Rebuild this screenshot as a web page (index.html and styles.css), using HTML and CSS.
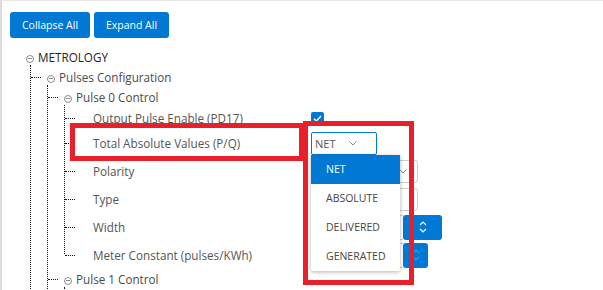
FILE: index.html
```html
<!DOCTYPE html>
<html>
<head>
<meta charset="utf-8">
<link rel="stylesheet" href="styles.css">
</head>
<body>
<div class="frame">
  <div class="toolbar">
    <button class="btn btn-collapse">Collapse All</button>
    <button class="btn btn-expand">Expand All</button>
  </div>
  <ul class="tree">
    <li class="node">
      <div class="row"><span class="toggle"></span><span class="label label-root">METROLOGY</span></div>
      <ul class="children children-root">
        <li class="node">
          <div class="row"><span class="toggle"></span><span class="label label-group">Pulses Configuration</span></div>
          <ul class="children">
            <li class="node">
              <div class="row"><span class="toggle"></span><span class="label label-group">Pulse 0 Control</span></div>
              <ul class="children children-leaves">
                <li class="leaf leaf-short">
                  <div class="row"><span class="spacer"></span><span class="label label-leaf">Output Pulse Enable (PD17)</span>
                    <span class="control"><span class="checkbox"><svg viewBox="0 0 13 13" width="13" height="13"><polyline points="3,6.8 5.4,9 10,4" fill="none" stroke="#fff" stroke-width="1.5"/></svg></span></span>
                  </div>
                </li>
                <li class="leaf">
                  <div class="row"><span class="spacer"></span><span class="label label-leaf">Total Absolute Values (P/Q)</span>
                    <span class="control">
                      <span class="select select-open">
                        <span class="select-value">NET</span>
                        <svg class="chev" viewBox="0 0 8 5" width="8" height="5"><polyline points="0.5,0.5 4,4 7.5,0.5" fill="none" stroke="#888" stroke-width="1"/></svg>
                        <span class="menu">
                          <span class="menu-item menu-item-active">NET</span>
                          <span class="menu-item">ABSOLUTE</span>
                          <span class="menu-item">DELIVERED</span>
                          <span class="menu-item">GENERATED</span>
                        </span>
                      </span>
                    </span>
                  </div>
                </li>
                <li class="leaf">
                  <div class="row"><span class="spacer"></span><span class="label label-leaf">Polarity</span>
                    <span class="control"><span class="select select-wide">
                      <svg class="chev chev-wide" viewBox="0 0 8 5" width="8" height="5"><polyline points="0.5,0.5 4,4 7.5,0.5" fill="none" stroke="#888" stroke-width="1"/></svg></span></span>
                  </div>
                </li>
                <li class="leaf">
                  <div class="row"><span class="spacer"></span><span class="label label-leaf">Type</span>
                    <span class="control"><span class="select select-wide"></span></span>
                  </div>
                </li>
                <li class="leaf">
                  <div class="row"><span class="spacer"></span><span class="label label-leaf">Width</span>
                    <span class="control"><span class="number"><span class="number-input"></span><span class="spin spin-wide"><svg viewBox="0 0 8 14" width="8" height="14"><polyline points="1,5 4,2 7,5" fill="none" stroke="#fff" stroke-width="1.2"/><polyline points="1,9 4,12 7,9" fill="none" stroke="#fff" stroke-width="1.2"/></svg></span></span></span>
                  </div>
                </li>
                <li class="leaf">
                  <div class="row"><span class="spacer"></span><span class="label label-leaf">Meter Constant (pulses/KWh)</span>
                    <span class="control"><span class="number"><span class="number-input"></span><span class="spin spin-narrow"><svg viewBox="0 0 8 14" width="8" height="14"><polyline points="1,5 4,2 7,5" fill="none" stroke="#3d97dd" stroke-width="1.2"/><polyline points="1,9 4,12 7,9" fill="none" stroke="#3d97dd" stroke-width="1.2"/></svg></span></span></span>
                  </div>
                </li>
              </ul>
            </li>
            <li class="node">
              <div class="row"><span class="toggle"></span><span class="label label-group">Pulse 1 Control</span></div>
              <ul class="children children-stub"></ul>
            </li>
          </ul>
        </li>
      </ul>
    </li>
  </ul>
  <div class="mark mark-label"></div>
  <div class="mark mark-menu"></div>
</div>
</body>
</html>
```

FILE: styles.css
```css
html, body {
  margin: 0;
  padding: 0;
  overflow: hidden;
  background: #fff;
}
.frame {
  position: relative;
  height: 290px;
  box-sizing: border-box;
  border-left: 2px solid #dcdcdc;
  border-top: 1px solid #e8e8e8;
  padding: 11px 0 0 8px;
  font-family: "Segoe UI", "Open Sans", "Noto Sans", sans-serif;
  overflow: hidden;
}
.toolbar {
  display: flex;
  gap: 4px;
  margin-bottom: 9px;
}
.btn {
  height: 26px;
  border: none;
  border-radius: 3px;
  background: #0078d4;
  color: #fff;
  font-family: inherit;
  font-size: 10.5px;
  padding: 0;
}
.btn-collapse { width: 80px; }
.btn-expand { width: 75px; }

.tree, .children {
  list-style: none;
  margin: 0;
  padding: 0;
}
.children {
  position: relative;
  margin-left: 16px;
  padding-left: 1px;
}
.children-root { margin-left: 20px; }
.children::before {
  content: "";
  position: absolute;
  left: 0;
  top: -2px;
  bottom: 0;
  border-left: 1px dotted #111;
}
.children-leaves::before { bottom: 15px; }
.children-stub { height: 12px; }

.row {
  position: relative;
  display: flex;
  align-items: center;
  height: 20px;
  padding-left: 16px;
}
.leaf .row { height: 28px; }
.leaf-short .row { height: 22px; }
.children > li > .row::before {
  content: "";
  position: absolute;
  left: 0;
  top: 50%;
  width: 10px;
  border-top: 1px dotted #111;
}
.toggle {
  position: relative;
  width: 8px;
  height: 8px;
  border: 1px solid #8a8a8a;
  border-radius: 50%;
  box-sizing: border-box;
  margin: 3px 4px 0 0;
  flex: none;
}
.toggle::after {
  content: "";
  position: absolute;
  left: 1px;
  right: 1px;
  top: 2.5px;
  border-top: 1px solid #8a8a8a;
}
.spacer {
  width: 12px;
  flex: none;
}
.label {
  font-size: 11.7px;
  color: #555;
  white-space: nowrap;
}
.label-root { color: #222; }
.label-group { color: #4a4a4a; }
.label-leaf { width: 218px; flex: none; }

.control {
  display: flex;
  align-items: center;
}
.checkbox {
  display: block;
  width: 13px;
  height: 13px;
  border-radius: 2px;
  background: #0078d4;
}
.checkbox svg { display: block; }

.select {
  position: relative;
  display: flex;
  align-items: center;
  box-sizing: border-box;
  height: 23px;
  width: 66px;
  border: 1px solid #0078d4;
  border-radius: 2px;
  padding-left: 3px;
  font-size: 11px;
  color: #555;
}
.select-wide {
  width: 107px;
  border-color: #cfcfcf;
  border-radius: 3px;
}
.chev {
  margin-left: 14px;
}
.chev-wide { margin-left: auto; margin-right: 10px; }
.menu {
  position: absolute;
  left: -1px;
  top: 22px;
  width: 89px;
  background: #fff;
  box-shadow: 0 1px 4px rgba(0, 0, 0, 0.3);
  border-radius: 0 0 2px 2px;
  z-index: 5;
  display: flex;
  flex-direction: column;
}
.menu-item {
  height: 29px;
  display: flex;
  align-items: center;
  padding-left: 15px;
  font-size: 10.5px;
  color: #444;
}
.menu-item-active {
  background: #0078d4;
  color: #fff;
}

.number {
  display: flex;
  height: 25px;
}
.number-input {
  width: 92px;
  box-sizing: border-box;
  border: 1px solid #cfcfcf;
  border-right: none;
  border-radius: 3px 0 0 3px;
}
.spin {
  display: flex;
  align-items: center;
  justify-content: center;
  background: #0078d4;
  border-radius: 3px;
}
.spin-wide { width: 39px; }
.spin-narrow { width: 25px; }
.spin svg { display: block; }

.mark {
  position: absolute;
  box-sizing: border-box;
  border: 5px solid #e8202a;
  z-index: 10;
}
.mark-label {
  left: 68px;
  top: 122px;
  width: 234px;
  height: 38px;
}
.mark-menu {
  left: 301px;
  top: 120px;
  width: 111px;
  height: 164px;
}
```
